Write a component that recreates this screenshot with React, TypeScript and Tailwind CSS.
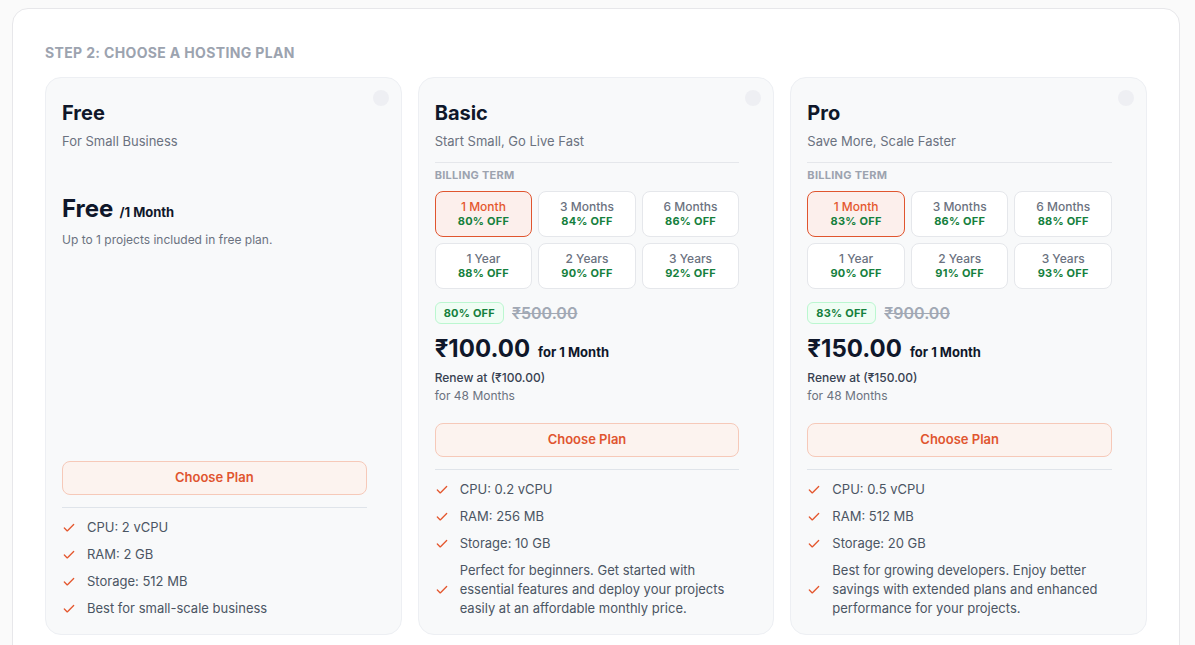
import React from "react";
import { Check } from "lucide-react";

type Term = { label: string; off: string };

type Plan = {
  name: string;
  tagline: string;
  free?: boolean;
  terms?: Term[];
  badge?: string;
  was?: string;
  price?: string;
  renew?: string;
  features: string[];
};

const plans: Plan[] = [
  {
    name: "Free",
    tagline: "For Small Business",
    free: true,
    features: ["CPU: 2 vCPU", "RAM: 2 GB", "Storage: 512 MB", "Best for small-scale business"],
  },
  {
    name: "Basic",
    tagline: "Start Small, Go Live Fast",
    terms: [
      { label: "1 Month", off: "80% OFF" },
      { label: "3 Months", off: "84% OFF" },
      { label: "6 Months", off: "86% OFF" },
      { label: "1 Year", off: "88% OFF" },
      { label: "2 Years", off: "90% OFF" },
      { label: "3 Years", off: "92% OFF" },
    ],
    badge: "80% OFF",
    was: "₹500.00",
    price: "₹100.00",
    renew: "₹100.00",
    features: [
      "CPU: 0.2 vCPU",
      "RAM: 256 MB",
      "Storage: 10 GB",
      "Perfect for beginners. Get started with essential features and deploy your projects easily at an affordable monthly price.",
    ],
  },
  {
    name: "Pro",
    tagline: "Save More, Scale Faster",
    terms: [
      { label: "1 Month", off: "83% OFF" },
      { label: "3 Months", off: "86% OFF" },
      { label: "6 Months", off: "88% OFF" },
      { label: "1 Year", off: "90% OFF" },
      { label: "2 Years", off: "91% OFF" },
      { label: "3 Years", off: "93% OFF" },
    ],
    badge: "83% OFF",
    was: "₹900.00",
    price: "₹150.00",
    renew: "₹150.00",
    features: [
      "CPU: 0.5 vCPU",
      "RAM: 512 MB",
      "Storage: 20 GB",
      "Best for growing developers. Enjoy better savings with extended plans and enhanced performance for your projects.",
    ],
  },
];

function TermButton({ term, active }: { term: Term; active: boolean }) {
  return (
    <button
      type="button"
      className={
        active
          ? "flex h-[46px] flex-col items-center justify-center rounded-lg border border-[#e0552f] bg-[#fcefec]"
          : "flex h-[46px] flex-col items-center justify-center rounded-lg border border-[#e5e7eb] bg-white"
      }
    >
      <span
        className={
          active
            ? "text-xs font-medium leading-[14px] text-[#e4572e]"
            : "text-xs font-medium leading-[14px] text-[#6b7280]"
        }
      >
        {term.label}
      </span>
      <span className="text-[11px] font-bold leading-[14px] tracking-[0.02em] text-[#15803d]">
        {term.off}
      </span>
    </button>
  );
}

function PlanCard({ plan }: { plan: Plan }) {
  return (
    <div className="relative flex flex-col rounded-2xl border border-[#edeff3] bg-[#f8f9fa] pb-4 pl-4 pr-[34px] pt-[21px]">
      <span className="absolute right-3 top-3 h-4 w-4 rounded-full bg-[#eeeff3]" />
      <h3 className="text-xl font-bold leading-7 text-[#0f172a]">{plan.name}</h3>
      <p className="mt-1 text-[13px] leading-5 text-[#6b7280]">{plan.tagline}</p>

      {plan.free ? (
        <>
          <div className="mt-[42px] flex items-baseline gap-1.5">
            <span className="text-2xl font-bold leading-8 text-[#0f172a]">Free</span>
            <span className="text-[13px] font-bold text-[#0f172a]">/1 Month</span>
          </div>
          <p className="mt-[7px] text-xs leading-4 text-[#6b7280]">
            Up to 1 projects included in free plan.
          </p>
          <div className="flex-1" />
        </>
      ) : (
        <>
          <div className="mt-[11px] border-t border-[#e5e7eb] pt-1">
            <p className="text-[11px] font-bold uppercase leading-4 tracking-wide text-[#9ca3af]">
              Billing Term
            </p>
            <div className="mt-2 grid grid-cols-3 gap-1.5">
              {plan.terms!.map((t, i) => (
                <TermButton key={t.label} term={t} active={i === 0} />
              ))}
            </div>
          </div>

          <div className="mt-3 flex items-center gap-2">
            <span className="flex h-[22px] items-center rounded-md border border-[#bbf7d0] bg-[#f0fdf4] px-2 text-[11px] font-bold tracking-[0.02em] text-[#15803d]">
              {plan.badge}
            </span>
            <span className="text-base font-semibold text-[#a1a8b4] line-through">{plan.was}</span>
          </div>
          <div className="mt-2 flex items-baseline gap-2">
            <span className="text-2xl font-bold leading-8 text-[#0f172a]">{plan.price}</span>
            <span className="text-[13px] font-bold text-[#0f172a]">for 1 Month</span>
          </div>
          <p className="mt-1 text-xs font-medium leading-[18px] text-[#374151]">
            Renew at ({plan.renew})
          </p>
          <p className="text-xs leading-[18px] text-[#6b7280]">for 48 Months</p>
        </>
      )}

      <button
        type="button"
        className={
          (plan.free ? "mt-auto " : "mt-[18px] ") +
          "h-[34px] w-full rounded-lg border border-[#f6c9b9] bg-[#fcf3ef] text-[13px] font-semibold text-[#e0552f]"
        }
      >
        Choose Plan
      </button>

      <ul className="mt-3 flex flex-col gap-2 border-t border-[#dfe4ea] pt-[10px]">
        {plan.features.map((f) => (
          <li key={f} className="flex items-center gap-[11px] text-[13px] leading-[19px] text-[#4b5563]">
            <Check className="h-3.5 w-3.5 shrink-0 text-[#e4572e]" strokeWidth={2.25} />
            <span>{f}</span>
          </li>
        ))}
      </ul>
    </div>
  );
}

export default function App() {
  return (
    <div className="min-h-screen bg-[#fafafa] px-3 pt-2 font-['Inter','Noto_Sans',sans-serif]">
      <div className="w-[1168px] rounded-2xl border border-[#e7e7ea] bg-white px-8 pb-8 pt-[34px]">
        <h2 className="text-sm font-bold uppercase leading-5 tracking-wide text-[#9ca3af]">
          Step 2: Choose a Hosting Plan
        </h2>
        <div className="mt-[14px] grid grid-cols-3 gap-4">
          {plans.map((p) => (
            <PlanCard key={p.name} plan={p} />
          ))}
        </div>
      </div>
    </div>
  );
}
